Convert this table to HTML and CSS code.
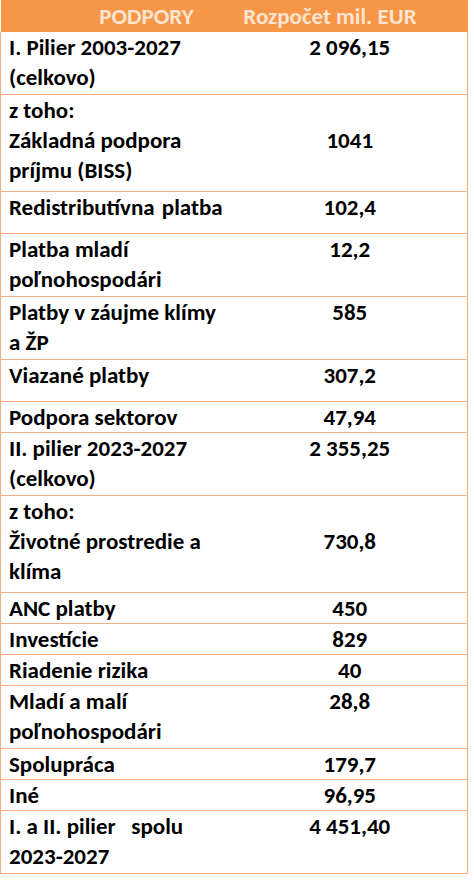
FILE: index.html
```html
<!DOCTYPE html>
<html lang="sk">
<head>
<meta charset="UTF-8">
<meta name="viewport" content="width=device-width, initial-scale=1.0">
<title>Podpory SPP 2023-2027</title>
<link rel="stylesheet" href="styles.css">
</head>
<body>

<table class="budget">
    <thead>
        <tr>
            <th class="name-head">PODPORY</th>
            <th class="value-head">Rozpočet mil. EUR</th>
        </tr>
    </thead>
    <tbody>
        <tr class="two">
            <td>I. Pilier 2003-2027<br>(celkovo)</td>
            <td class="value">2 096,15</td>
        </tr>
        <tr class="three">
            <td>z toho:<br>Základná podpora<br>príjmu (BISS)</td>
            <td class="value"><div class="skip">1041</div></td>
        </tr>
        <tr class="tall">
            <td class="spread">Redistributívna platba</td>
            <td class="value">102,4</td>
        </tr>
        <tr class="two">
            <td>Platba mladí<br>poľnohospodári</td>
            <td class="value">12,2</td>
        </tr>
        <tr class="two">
            <td>Platby v záujme klímy<br>a ŽP</td>
            <td class="value">585</td>
        </tr>
        <tr class="tall">
            <td>Viazané platby</td>
            <td class="value">307,2</td>
        </tr>
        <tr class="one">
            <td>Podpora sektorov</td>
            <td class="value">47,94</td>
        </tr>
        <tr class="two">
            <td>II. pilier 2023-2027<br>(celkovo)</td>
            <td class="value">2 355,25</td>
        </tr>
        <tr class="three">
            <td>z toho:<br>Životné prostredie a<br>klíma</td>
            <td class="value"><div class="skip">730,8</div></td>
        </tr>
        <tr class="one">
            <td>ANC platby</td>
            <td class="value">450</td>
        </tr>
        <tr class="one">
            <td>Investície</td>
            <td class="value">829</td>
        </tr>
        <tr class="one">
            <td>Riadenie rizika</td>
            <td class="value">40</td>
        </tr>
        <tr class="two">
            <td>Mladí a malí<br>poľnohospodári</td>
            <td class="value">28,8</td>
        </tr>
        <tr class="one">
            <td>Spolupráca</td>
            <td class="value">179,7</td>
        </tr>
        <tr class="one">
            <td>Iné</td>
            <td class="value">96,95</td>
        </tr>
        <tr class="two">
            <td>I. a II. pilier &nbsp;&nbsp;spolu<br>2023-2027</td>
            <td class="value">4 451,40</td>
        </tr>
    </tbody>
</table>

</body>
</html>
```

FILE: styles.css
```css
body {
    margin: 0;
    background: #ffffff;
    font-family: Carlito, Lato, "Open Sans", sans-serif;
    font-weight: bold;
    font-size: 23px;
    color: #000;
}
.budget {
    width: 468px;
    border-collapse: collapse;
    table-layout: fixed;
}
.budget th {
    background: #f79646;
    color: #fde4d0;
    height: 32px;
    line-height: 32px;
    padding: 0;
    font-weight: bold;
    white-space: nowrap;
}
.name-head {
    width: 232px;
    text-align: center;
    padding-left: 60px !important;
    box-sizing: border-box;
}
.value-head {
    text-align: center;
    padding-right: 40px !important;
}
.budget td {
    padding: 0 0 0 8px;
    line-height: 30px;
    vertical-align: top;
    white-space: nowrap;
    border-bottom: 1px solid #f2b084;
}
.budget td:first-child {
    border-left: 1px solid #f2b084;
}
.budget td.value {
    padding: 0;
    text-align: center;
    border-right: 1px solid #f2b084;
}
.budget tr.two td {
    padding-bottom: 2px;
}
.budget tr.three td {
    padding-bottom: 6px;
}
.budget tr.tall td {
    padding-bottom: 11px;
}
.skip {
    padding-top: 30px;
}
.spread {
    word-spacing: 2px;
}
```
